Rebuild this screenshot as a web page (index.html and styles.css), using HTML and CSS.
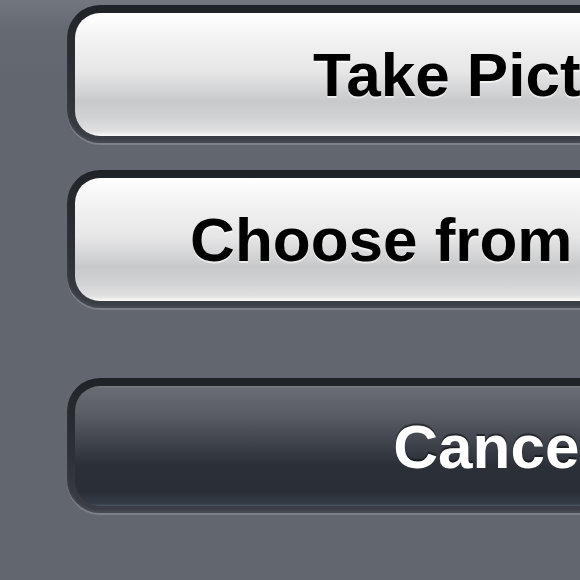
FILE: index.html
```html
<!DOCTYPE html>
<html>
<head>
    <title>Action Sheet</title>
    <link rel="stylesheet" href="styles.css">
</head>
<body>
    <div class="sheet">
        <div class="sheet-btn">
            <button class="face light">Take Picture</button>
        </div>
        <div class="sheet-btn">
            <button class="face light">Choose from Library</button>
        </div>
        <div class="sheet-btn cancel">
            <button class="face dark">Cancel</button>
        </div>
    </div>
</body>
</html>
```

FILE: styles.css
```css
html, body {
    margin: 0;
    height: 100%;
    overflow: hidden;
}
body {
    font-family: 'Liberation Sans', Arial, sans-serif;
    background: linear-gradient(#72767e 0px, #656971 30px, #62666e 90px, #62666e 100%);
}
.sheet {
    display: flex;
    flex-direction: column;
    gap: 27px;
    padding: 5px 0 0 67px;
    width: 856px;
}
.sheet-btn {
    padding: 8px 8px 7px;
    border-radius: 33px;
    background: linear-gradient(#1e2126 0px, #25282d 20px, #2e3137 60%, #3b3f46 100%);
    box-shadow: 0 2px 0 rgba(150, 155, 163, 0.5), inset 0 -2px 3px rgba(255,255,255,0.08);
}
.sheet-btn.cancel {
    margin-top: 43px;
}
.face {
    display: block;
    width: 100%;
    height: 123px;
    border: none;
    border-radius: 25px;
    font-family: inherit;
    font-size: 62px;
    font-weight: bold;
    padding: 0;
    cursor: pointer;
}
.face.light {
    color: #000;
    background: linear-gradient(#ffffff 0%, #f4f4f5 18%, #e6e6e7 48%, #c8c9cb 72%, #d2d3d4 86%, #e0e0e1 96%, #fbfbfb 100%);
    text-shadow: 0 2px 0 rgba(255,255,255,0.6);
}
.face.dark {
    height: 120px;
    color: #fff;
    background: linear-gradient(#7c7f86 0px, #6a6c73 2px, #595c64 25%, #3c4049 50%, #2b2f38 66%, #2a2e37 88%, #353c46 98%, #4c5662 100%);
    text-shadow: 0 -2px 1px rgba(0,0,0,0.5);
}
```
